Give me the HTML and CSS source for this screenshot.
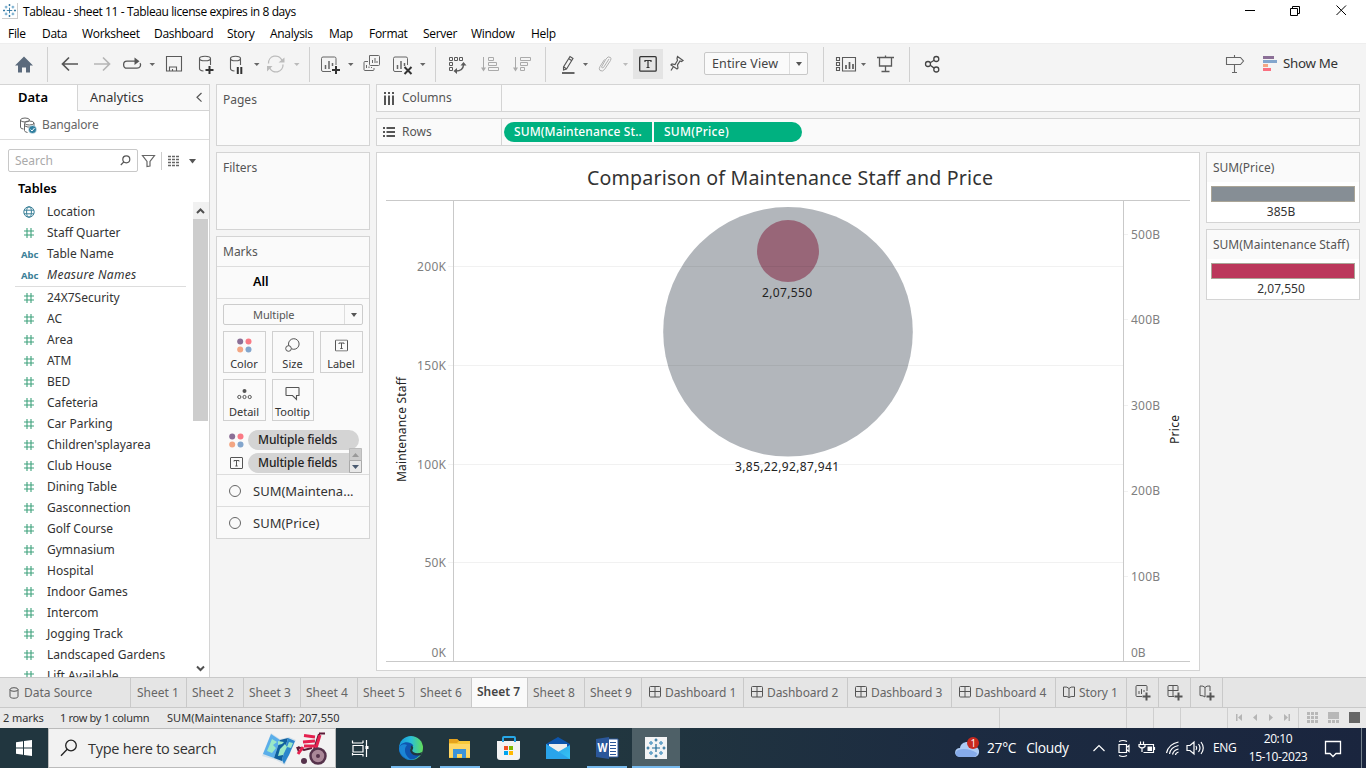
FILE: index.html
```html
<!DOCTYPE html>
<html lang="en">
<head>
<meta charset="utf-8">
<title>Tableau - sheet 11</title>
<link rel="stylesheet" href="styles.css">
</head>
<body>
<svg width="0" height="0" class="defs">
  <defs>
    <symbol id="hash" viewBox="0 0 12 12"><path d="M4 1v10M8 1v10M1 4h10M1 8h10" stroke="#3fa27c" stroke-width="1.1" fill="none"/></symbol>
    <symbol id="dash" viewBox="0 0 12 12"><path d="M.5 1.5q0-1 1-1h9q1 0 1 1v8.500q0 1-1 1h-9q-1 0-1-1zM.5 5.500h11M6 .5v10.500" stroke="#555" fill="none"/></symbol>
    <symbol id="book" viewBox="0 0 12 12"><path d="M6 2.500v9M.5 1q4-.5 5.500 1.500Q7.500.5 11.500 1v9.500q-4-.5-5.500 1-1.500-1.500-5.500-1z" stroke="#555" fill="none"/></symbol>
    <symbol id="dots" viewBox="0 0 15 15"><circle cx="3.200" cy="3.500" r="3" fill="#8b6f96"/><circle cx="11.500" cy="3.500" r="3" fill="#fa7a85"/><circle cx="3.200" cy="11.500" r="3" fill="#f3a683"/><circle cx="11.500" cy="11.500" r="3" fill="#83a6cd"/></symbol>
    <symbol id="label" viewBox="0 0 13 12"><rect x=".5" y=".5" width="12" height="11" rx=".5" fill="none" stroke="#555"/><path d="M4 4.500V3.500h5v1M6.500 3.500v5.500M5.300 9h2.400" fill="none" stroke="#555"/></symbol>
    <symbol id="tableau" viewBox="0 0 22 22"><path d="M11 7v8M7 11h8M11 1.500v3M9.500 3h3M11 17.500v3M9.500 19h3M1.500 11h3M3 9.500v3M17.500 11h3M19 9.500v3" stroke="#1f6a97" stroke-width="1.200"/><path d="M6 4v4M4 6h4M16 4v4M14 6h4M6 14v4M4 16h4M16 14v4M14 16h4" stroke="#5f9fc6" stroke-width="1.500"/></symbol>
  </defs>
</svg>

<header class="titlebar">
  <svg class="applogo" width="16" height="16" viewBox="0 0 22 22"><use href="#tableau"/></svg>
  <span class="apptitle">Tableau - sheet 11 - Tableau license expires in 8 days</span>
  <svg width="136" height="24" viewBox="1230 0 136 24" fill="none" stroke="#000"><path d="M1245 10.500h10M1290.500 8.500h7v7h-7zM1292.500 8.500v-2h7v7h-2M1336.500 5.500l9.500 9.500M1346 5.500l-9.500 9.500"/></svg>
</header>
<nav class="menubar"><span>File</span><span>Data</span><span>Worksheet</span><span>Dashboard</span><span>Story</span><span>Analysis</span><span>Map</span><span>Format</span><span>Server</span><span>Window</span><span>Help</span></nav>

<div class="toolbar">
  <svg class="sep" width="48" height="41" viewBox="0 43 48 41"><path d="M24 56.500l9 9H30V72.500h-4v-5h-4v5h-4v-7h-3z" fill="#5b6a7c"/></svg>
  <svg width="112" height="41" viewBox="48 43 112 41" fill="none"><path d="M62.500 64H78M69 57.500L62.500 64l6.500 6.500" stroke="#555" stroke-width="1.700"/><path d="M94 64h15.500M103 57.500l6.500 6.500-6.500 6.500" stroke="#b5b5b5" stroke-width="1.700"/><path d="M136 61.200h-9c-4.500 0-4.500 7 0 7h10c3 0 4.500-3 3-5" stroke="#555" stroke-width="1.300"/><path d="M134.500 57.500l5 3.700-5 3.700z" fill="#555"/><path d="M149.500 63h5.500l-2.700 3z" fill="#666"/></svg>
  <svg class="sep" width="150" height="41" viewBox="160 43 150 41" fill="none" stroke="#5a5a5a" stroke-width="1.100"><path d="M166.500 56.500h15v14.500h-15zM169.500 71v-4h7v4M172.500 69v2"/><path d="M199.500 58.500v10c0 1.500 2 2.300 4 2.500M210.500 58.500v6.500"/><ellipse cx="205" cy="58.500" rx="5.500" ry="2.300"/><path d="M209.500 66v8M205.500 70h8" stroke="#333" stroke-width="2"/><path d="M230.500 58.500v10c0 1.500 2 2.300 4 2.500M240.500 58.500v6.500"/><ellipse cx="235.500" cy="58.500" rx="5" ry="2.300"/><path d="M237.800 67v7M241.300 67v7" stroke="#333" stroke-width="2"/><path d="M254 63h5.500l-2.700 3z" fill="#666" stroke="none"/><g stroke="#bbb" stroke-width="1.300"><path d="M268.500 63.500a7 7 0 0 1 13.500-3M283 64.500a7 7 0 0 1-13.500 3"/></g><path d="M278.500 62.500h6v-5zM267 66v5.500l5.500-5.500zM294 63h5.500l-2.700 3z" fill="#bbb" stroke="none"/></svg>
  <svg class="sep" width="126" height="41" viewBox="310 43 126 41" fill="none" stroke="#666"><path d="M331 71.500h-8q-1.500 0-1.500-1.500V58.500q0-1.500 1.500-1.500h11.500q1.500 0 1.500 1.500V65"/><path d="M325.500 69v-4M329 69v-8M332.500 66v-3" stroke-width="1.500"/><path d="M336 66v8M332 70h8" stroke="#333" stroke-width="2"/><path d="M348 63h5.500l-2.700 3zM420 63h5.500l-2.700 3z" fill="#666" stroke="none"/><path d="M368 61.500h-3q-1 0-1 1v7q0 1 1 1h8q1 0 1-1V68M369.500 55.500h9q1 0 1 1v8q0 1-1 1h-8q-1 0-1-1zM366.500 68v-3M369 68v-1.500M371.500 68v-1M372.500 63v-3M375 63v-5M377 63v-2"/><path d="M402 71.500h-7q-1.500 0-1.500-1.500V58.500q0-1.500 1.500-1.500h11q1.500 0 1.500 1.500V65"/><path d="M397.500 69v-4M401 69v-8M404.500 66v-3" stroke-width="1.500"/><path d="M404.500 67l7 7M411.500 67l-7 7" stroke="#333" stroke-width="2"/></svg>
  <svg class="sep" width="110" height="41" viewBox="436 43 110 41" fill="none" stroke="#5a5a5a"><path d="M449.500 57.500h3v3h-3zM454.500 57.500h3v3h-3zM459.500 57.500h3v3h-3zM449.500 62.500h3v3h-3zM449.500 67.500h3v3h-3z"/><path d="M456 71q7 0 7.500-6" stroke-width="1.500"/><path d="M460.500 65.500h6l-3-3.500zM457 68v6l-3.500-3z" fill="#5a5a5a" stroke="none"/><g stroke="#aaa"><path d="M483.500 57v13M488.500 57.500h5v3h-5zM488.500 62.500h8v3h-8zM488.500 67.500h10v3h-10zM515.500 57v13M520.500 57.500h10v3h-10zM520.500 62.500h7v3h-7zM520.500 67.500h4v3h-4z"/><path d="M481 67.500h5l-2.500 4zM513 67.500h5l-2.500 4z" fill="#aaa" stroke="none"/></g></svg>
  <svg width="87" height="41" viewBox="546 43 87 41" fill="none"><path d="M563.500 70v-3l6.500-10.500 3 2-6.500 10.500zM564 67l2.500 2M568.500 58.500l3 2" stroke="#555" stroke-width="1.100"/><path d="M562 73h12.500" stroke="#555" stroke-width="1.800"/><path d="M583 63h5l-2.500 3z" fill="#666"/><path d="M609 59l-5.500 8.500q-1.500 1-2-.5L606 59q2-3.500 4.500-1.500 1 1 0 3l-6 9q-2 2.500-4.500 1-1.500-1.500 0-4l4.500-7" stroke="#b0b0b0"/><path d="M623 63h5l-2.500 3z" fill="#bbb"/></svg>
  <div class="toggle"><svg width="18" height="16" viewBox="0 0 18 16" fill="none" stroke="#333"><rect x=".7" y=".7" width="16.500" height="14.500" rx="1" stroke-width="1.300"/><path d="M6 6V4.500h6V6M9 4.500v7M7.500 11.500h3" stroke-width="1.200"/></svg></div>
  <svg width="41" height="41" viewBox="663 43 41 41" fill="none" stroke="#555" stroke-width="1.200"><path d="M677.500 56.500l5.500 4-1.500 1-1.500-.5-2.500 4 .5 3-1 1-6-4 1-1 3 .5 2.500-4-.5-2zM673.500 66.500l-2.500 4"/></svg>
  <div class="combo"><span>Entire View</span><i class="caret"></i></div>
  <svg class="sep" width="16" height="41"></svg>
  <svg class="sep" width="86" height="41" viewBox="824 43 86 41" fill="none" stroke="#5a5a5a"><path d="M836.500 57.500h3v3h-3zM836.500 62.500h3v3h-3zM836.500 67.500h3v3h-3zM842.500 57.500h13v13.500h-13z" stroke-width="1.100"/><path d="M846 69v-4M849.500 69v-7M853 69v-5" stroke-width="1.700"/><path d="M861 63h5l-2.500 3z" fill="#666" stroke="none"/><path d="M877 57.500h17M879.500 58v8h12v-8M885.500 66v5M881.500 71.500h8M885.500 55.500v2" stroke-width="1.300"/></svg>
  <svg class="grow" width="300" height="41" viewBox="910 43 300 41" fill="none" stroke="#444" stroke-width="1.300"><circle cx="928" cy="64" r="2.500"/><circle cx="936.300" cy="59" r="2.500"/><circle cx="936.300" cy="69.500" r="2.500"/><path d="M930.200 62.700l4-2.400M930.200 65.300l4 2.800"/></svg>
  <svg width="34" height="41" viewBox="1222 43 34 41" fill="none" stroke="#666" stroke-width="1.100"><path d="M1226.500 57.500h14l3 3.500-3 3.500h-14zM1234.500 55v2.500M1234.500 64.500v7.500M1232 72.500h5"/></svg>
  <svg width="27" height="41" viewBox="1256 43 27 41"><path d="M1263 56h11v3h-11z" fill="#8b6f96"/><path d="M1263 60h14v3h-14z" fill="#83a6cd"/><path d="M1263 64h5v3h-5z" fill="#f3a683"/><path d="M1263 68h8v3h-8z" fill="#fa7080"/></svg>
  <span class="showme">Show Me</span>
</div>

<main class="main">
  <aside class="datapane">
    <div class="panetabs"><b>Data</b><div class="analytics"><span>Analytics</span><svg width="7" height="11" viewBox="0 0 7 11"><path d="M5.500 1L1 5.300l4.500 4.300" fill="none" stroke="#555" stroke-width="1.200"/></svg></div></div>
    <div class="source"><svg width="17" height="17" viewBox="0 0 17 17" fill="none" stroke="#666"><ellipse cx="5" cy="3" rx="4.500" ry="2"/><path d="M.5 3v7q0 2 3 2M4.500 6.500v7q0 1.500 3 2M14 6v4M5 9q3 2 6 .5M9.500 3V2.500"/><ellipse cx="9.300" cy="6" rx="4.700" ry="2"/><circle cx="12.500" cy="12.500" r="4" fill="#3280a0" stroke="#fff" stroke-width=".5"/><path d="M10.500 12.500l1.500 1.500 2.500-3" stroke="#fff"/></svg><span>Bangalore</span></div>
    <div class="searchrow">
      <div class="search"><span>Search</span><svg width="11" height="11" viewBox="0 0 11 11" fill="none" stroke="#555" stroke-width="1.200"><circle cx="6.300" cy="4.300" r="3.500"/><path d="M3.800 6.800L.8 10"/></svg></div>
      <svg width="61" height="24" viewBox="139 148 61 24" fill="none" stroke="#666"><path d="M142.500 154.500h12l-4.500 6v4.500l-3 .5v-5z" stroke-width="1.200"/><path d="M161.500 151v18" stroke="#ccc"/><path d="M168 155.500h12M168 158.500h12M168 161.500h12M168 164.500h12" stroke-width="1.300" stroke-dasharray="3 1"/><path d="M189 158h7l-3.500 4.500z" fill="#555" stroke="none"/></svg>
    </div>
    <b class="tables">Tables</b>
    <div class="fieldwrap">
      <div class="fields">
        <div><svg width="12" height="12" viewBox="0 0 12 12" fill="none" stroke="#3b8098"><circle cx="6" cy="6" r="5.200"/><ellipse cx="6" cy="6" rx="2.400" ry="5.200"/><path d="M1 4.200h10M1 7.800h10"/></svg><span>Location</span></div>
        <div><svg><use href="#hash"/></svg><span>Staff Quarter</span></div>
        <div><em>Abc</em><span>Table Name</span></div>
        <div><em>Abc</em><span class="it">Measure Names</span></div>
        <hr>
        <div><svg><use href="#hash"/></svg><span>24X7Security</span></div>
        <div><svg><use href="#hash"/></svg><span>AC</span></div>
        <div><svg><use href="#hash"/></svg><span>Area</span></div>
        <div><svg><use href="#hash"/></svg><span>ATM</span></div>
        <div><svg><use href="#hash"/></svg><span>BED</span></div>
        <div><svg><use href="#hash"/></svg><span>Cafeteria</span></div>
        <div><svg><use href="#hash"/></svg><span>Car Parking</span></div>
        <div><svg><use href="#hash"/></svg><span>Children'splayarea</span></div>
        <div><svg><use href="#hash"/></svg><span>Club House</span></div>
        <div><svg><use href="#hash"/></svg><span>Dining Table</span></div>
        <div><svg><use href="#hash"/></svg><span>Gasconnection</span></div>
        <div><svg><use href="#hash"/></svg><span>Golf Course</span></div>
        <div><svg><use href="#hash"/></svg><span>Gymnasium</span></div>
        <div><svg><use href="#hash"/></svg><span>Hospital</span></div>
        <div><svg><use href="#hash"/></svg><span>Indoor Games</span></div>
        <div><svg><use href="#hash"/></svg><span>Intercom</span></div>
        <div><svg><use href="#hash"/></svg><span>Jogging Track</span></div>
        <div><svg><use href="#hash"/></svg><span>Landscaped Gardens</span></div>
        <div><svg><use href="#hash"/></svg><span>Lift Available</span></div>
      </div>
      <div class="scroll"><svg width="16" height="17" viewBox="0 0 16 17"><path d="M4 11l3.500-3.500L11 11" fill="none" stroke="#505050" stroke-width="2"/></svg><div class="thumb"></div><svg width="16" height="17" viewBox="0 0 16 17"><path d="M4 6.500L7.500 10 11 6.500" fill="none" stroke="#505050" stroke-width="2"/></svg></div>
    </div>
  </aside>

  <section class="shelves">
    <div class="card pages">Pages</div>
    <div class="card filters">Filters</div>
    <div class="card marks">
      <div class="mhead">Marks</div>
      <div class="mall">All</div>
      <div class="mbody">
        <div class="mcombo"><span>Multiple</span><i class="caret"></i></div>
        <div class="mgrid">
          <div><svg width="15" height="15"><use href="#dots"/></svg><span>Color</span></div>
          <div><svg width="15" height="15" viewBox="0 0 15 15" fill="none" stroke="#555"><circle cx="8.800" cy="6" r="5.300"/><circle cx="3.500" cy="10.500" r="2.800" fill="#fafafa"/></svg><span>Size</span></div>
          <div><svg width="13" height="15" viewBox="0 -1.500 13 15"><use href="#label" width="13" height="12"/></svg><span>Label</span></div>
          <div><svg width="15" height="15" viewBox="0 0 15 15" fill="none" stroke="#555"><circle cx="7.500" cy="5" r="2" fill="#555" stroke="none"/><circle cx="2.300" cy="11" r="1.600"/><circle cx="7.500" cy="11" r="1.600"/><circle cx="12.700" cy="11" r="1.600"/></svg><span>Detail</span></div>
          <div><svg width="15" height="15" viewBox="0 0 15 15" fill="none" stroke="#555"><path d="M1.500 1.500h12q.5 0 .5.500v7.500h-2.500v4L7.500 9.500h-6q-.5 0-.5-.5V2q0-.5.500-.5z" stroke-width="1.100"/></svg><span>Tooltip</span></div>
        </div>
        <div class="pillrow"><svg width="15" height="15"><use href="#dots"/></svg><div>Multiple fields</div></div>
        <div class="pillrow"><svg width="15" height="12"><use href="#label" width="13" height="12" x="1"/></svg><div>Multiple fields</div></div>
        <svg class="spin" width="13" height="25" viewBox="0 0 13 25"><path d="M.5.500h12v12H.5z" fill="#ccc" stroke="#bbb"/><path d="M.5 12.500h12v12H.5z" fill="#e8e8e8" stroke="#aaa"/><path d="M3 9h7L6.500 5z" fill="#999"/><path d="M3 17h7l-3.500 4z" fill="#4a5a70"/></svg>
      </div>
      <div class="mrow"><i></i>SUM(Maintena...</div>
      <div class="mrow"><i></i>SUM(Price)</div>
    </div>
  </section>

  <section class="work">
    <div class="shelf"><div class="sname"><svg width="12" height="13" viewBox="0 0 12 13"><path d="M2 0v2M2 3.500V13M6 0v2M6 3.500V13M10 0v2M10 3.500V13" stroke="#555" stroke-width="2"/></svg>Columns</div></div>
    <div class="shelf"><div class="sname"><svg width="12" height="13" viewBox="0 0 12 13"><path d="M0 2h2M3.500 2H12M0 6h2M3.500 6H12M0 10h2M3.500 10H12" stroke="#555" stroke-width="2"/></svg>Rows</div><div class="pill p1">SUM(Maintenance St..</div><div class="pill p2">SUM(Price)</div></div>
    <div class="viewrow">
      <svg class="chart" width="824" height="519" viewBox="376 152 824 519">
        <rect x="376.500" y="152.500" width="823" height="518" fill="#fff" stroke="#d4d4d4"/>
        <text x="587" y="185" class="ctitle" textLength="406">Comparison of Maintenance Staff and Price</text>
        <circle cx="788" cy="331.800" r="124.800" fill="#b2b6bb"/>
        <circle cx="788" cy="251" r="31" fill="#986678"/>
        <path d="M448 266.500h675M448 365.500h675M448 464.500h675M448 562.500h675M1124 234.500h4M1124 319.500h4M1124 405.500h4M1124 491.500h4M1124 576.500h4" stroke="#000" stroke-opacity=".055" fill="none"/>
        <path d="M386 200.500h804M386 661.500h804M453.500 200v461M1123.500 200v461" stroke="#c9c9c9" fill="none"/>
        <g class="tick">
          <text x="417" y="271" textLength="29">200K</text><text x="417" y="370" textLength="29">150K</text><text x="417" y="469" textLength="29">100K</text><text x="424.500" y="567" textLength="21.500">50K</text><text x="431.500" y="657" textLength="14.500">0K</text>
          <text x="1131" y="239" textLength="29">500B</text><text x="1131" y="324" textLength="29">400B</text><text x="1131" y="410" textLength="29">300B</text><text x="1131" y="495" textLength="29">200B</text><text x="1131" y="581" textLength="29">100B</text><text x="1131" y="657" textLength="14.500">0B</text>
        </g>
        <g class="mlabel">
          <text x="762" y="297" textLength="50">2,07,550</text><text x="735" y="471" textLength="104">3,85,22,92,87,941</text>
          <text transform="translate(406 482) rotate(-90)" textLength="105">Maintenance Staff</text><text transform="translate(1179 444) rotate(-90)" textLength="29">Price</text>
        </g>
      </svg>
      <div class="legends">
        <div class="legend"><div class="lh"><span>SUM(Price)</span></div><div class="bar grey"></div><p>385B</p></div>
        <div class="legend"><div class="lh"><span>SUM(Maintenance Staff)</span></div><div class="bar red"></div><p>2,07,550</p></div>
      </div>
    </div>
  </section>
</main>

<div class="tabs">
  <div class="tab ds"><svg width="10" height="12" viewBox="0 0 10 12" fill="none" stroke="#555"><ellipse cx="5" cy="2.500" rx="4" ry="1.800"/><path d="M1 2.500v7c0 2.300 8 2.300 8 0v-7"/></svg>Data Source</div>
  <div class="tab s1">Sheet 1</div><div class="tab">Sheet 2</div><div class="tab">Sheet 3</div><div class="tab">Sheet 4</div><div class="tab">Sheet 5</div><div class="tab">Sheet 6</div><div class="tab active">Sheet 7</div><div class="tab">Sheet 8</div><div class="tab">Sheet 9</div>
  <div class="tab d d1"><svg><use href="#dash"/></svg>Dashboard 1</div><div class="tab d"><svg><use href="#dash"/></svg>Dashboard 2</div><div class="tab d"><svg><use href="#dash"/></svg>Dashboard 3</div><div class="tab d"><svg><use href="#dash"/></svg>Dashboard 4</div>
  <div class="tab d story"><svg><use href="#book"/></svg>Story 1</div>
  <div class="tab new"><svg viewBox="0 0 16 16" fill="none" stroke="#555"><path d="M7 11.500H2q-1 0-1-1v-9q0-1 1-1h9q1 0 1 1V6M4 9V6M6.500 9V4M9 7V5"/><path d="M11.500 7.500v8M7.500 11.500h8" stroke-width="2"/></svg></div>
  <div class="tab new"><svg viewBox="0 0 16 16" fill="none" stroke="#555"><path d="M7 11.500H2q-1 0-1-1v-9q0-1 1-1h8q1 0 1 1V6M6 .5v11M1 5.500h10"/><path d="M11.500 7.500v8M7.500 11.500h8" stroke-width="2"/></svg></div>
  <div class="tab new"><svg viewBox="0 0 16 16" fill="none" stroke="#555"><path d="M6 2.500v9.500Q4.500 10.500 1 10.500V1q3.500-.5 5 1.500Q7.500.5 11 1v5"/><path d="M11.500 7.500v8M7.500 11.500h8" stroke-width="2"/></svg></div>
</div>

<div class="status"><span class="t1">2 marks</span><span class="t2">1 row by 1 column</span><span class="t3">SUM(Maintenance Staff): 207,550</span>
  <svg width="367" height="20" viewBox="999 708 367 20"><path d="M999.500 708v20M1126.500 708v20M1153.500 708v20M1180.500 708v20M1227.500 708v20M1298.500 708v20" stroke="#cfcfcf"/><path d="M1236 714h1.500v7h-1.500zM1242 714v7l-4-3.500zM1257 714v7l-4-3.500zM1269 714v7l4-3.500zM1284 714v7l4-3.500zM1288.500 714h1.500v7h-1.500z" fill="#b5b5b5"/><path d="M1307 712h3v3h-3zM1311 712h3v3h-3zM1315 712h3v3h-3zM1307 716h3v3h-3zM1311 716h3v3h-3zM1315 716h3v3h-3zM1307 720h3v3h-3zM1311 720h3v3h-3zM1315 720h3v3h-3zM1328 712h11v7h-11zM1328 720h3v3h-3zM1332 720h3v3h-3zM1336 720h3v3h-3z" fill="#b8b8b8"/><path d="M1349 712h11v11h-11z" fill="#666"/></svg>
</div>

<footer class="taskbar">
  <svg width="48" height="40" viewBox="0 728 48 40" fill="#fff"><path d="M16 742.300l7-1v6.200h-7zM24 741.100l8-1.100v7.500h-8zM16 748.500h7v6.200l-7-1zM24 748.500h8v7.500l-8-1.100z"/></svg>
  <div class="winsearch"><svg width="18" height="18" viewBox="0 0 18 18" fill="none" stroke="#222" stroke-width="1.300"><circle cx="11" cy="6.500" r="5.300"/><path d="M7.200 10.300L1 16.800"/></svg><span>Type here to search</span>
    <svg width="68" height="38" viewBox="261 729 68 38"><path d="M271 733l9 6 9-2 7 3-8 17-3 8-9-5-14-4z" fill="#d4e1ea"/><path d="M271 734l9 6-6 18-11-4z" fill="#5aaeea"/><path d="M280 740l8-2-5 18-1 5-8-3z" fill="#0f5f9e"/><path d="M288 738l7 3-6 14-5 9-2-4z" fill="#2b86cc"/><path d="M272 739l5 3-4 3 3 3-4 5-5-2 3-7zM280 749l5-5 2 3-4 8-5 1zM289 742l4 1-2 5-4-1zM278 741l6 1-2 2-4 1z" fill="#9be8c6"/>
      <g fill="none"><path d="M325 733.500h-6M319 734l-5 15M312 748l-8 2-6-3M299 752l-2-5" stroke="#5c1b37" stroke-width="2"/><path d="M320 735l-4 13M303 742l12-1M304 735.500l11 1.500M304 746h11M303 747l-5 7" stroke="#e5214f" stroke-width="3"/><circle cx="318" cy="756" r="7.500" stroke="#55324b" stroke-width="2.500" fill="#aa8798"/><circle cx="318" cy="756" r="2" fill="#55324b"/><circle cx="304" cy="761" r="3" fill="#55324b"/></g></svg>
  </div>
  <svg class="apps" width="344" height="40" viewBox="336 728 344 40">
    <defs><linearGradient id="ed" x1="0" y1=".3" x2="1" y2=".3"><stop offset="0" stop-color="#1497de"/><stop offset=".5" stop-color="#2bbfd8"/><stop offset="1" stop-color="#62dd58"/></linearGradient><linearGradient id="ml" x1="0" y1="0" x2="1" y2="1"><stop offset="0" stop-color="#2a9be5"/><stop offset="1" stop-color="#35c5f5"/></linearGradient></defs>
    <path d="M352.500 743v-2.500M352.500 753v2.500M352 743h11M363 740.500v2.500M353 745.500h10v6.500h-10zM352 754.500h11v2M366.500 740v17" stroke="#fff" stroke-width="1.200" fill="none"/><path d="M365.500 746h3v3h-3z" fill="#fff"/>
    <circle cx="411" cy="748" r="12" fill="url(#ed)"/><path d="M399 748c1-6 10-8 14-3 1 2-2 1-3 4 1 4 7 6 11 4-4 8-15 9-20 2q-2-3-2-7z" fill="#0f55b0"/><path d="M407 745c-4 4-2 12 5 15-7 0-13-6-13-12 1-3 5-5 8-3z" fill="#1b86d6"/><path d="M411 745.500c3.500 1 2 3.500 1.200 5 1 3 6 3.500 10 1.500l-1 3c-5 1.500-10 0-11-4-.5-2 1-3.500.8-5.500z" fill="#21363f"/>
    <path d="M449 739h8l2 2h11v17h-21z" fill="#f9c83a"/><path d="M449 739h8l2 2-2 2h-8z" fill="#e6a21d"/><path d="M449 744h21v13h-21z" fill="#ffd766"/><path d="M453 749h13v9h-4v-4h-5v4h-4z" fill="#3d93d8"/>
    <path d="M497 741h23v16q0 3-3 3h-17q-3 0-3-3z" fill="#f3f3f3"/><path d="M503 742v-4q0-1 1-1h10q1 0 1 1v4" stroke="#27a8e8" stroke-width="2" fill="none"/><path d="M504 746h4v4h-4z" fill="#f25022"/><path d="M509 746h4v4h-4z" fill="#7fba00"/><path d="M504 751h4v4h-4z" fill="#00a4ef"/><path d="M509 751h4v4h-4z" fill="#ffb900"/>
    <path d="M546 744l12-7 12 7v4h-24z" fill="#0d55ac"/><path d="M549 744h18v8h-18z" fill="#eee"/><path d="M546 744l12 8 12-7v14h-24z" fill="url(#ml)"/><path d="M546 744l24 15h-24z" fill="#2aa4ea"/>
    <path d="M608 739h10v18h-10z" fill="#fff" stroke="#2b579a"/><path d="M610 742.500h6M610 745.500h6M610 748.500h6M610 751.500h6M610 754.500h6" stroke="#2b579a"/><path d="M596 739l13-2v22l-13-2z" fill="#2b579a"/><text x="597.500" y="752" class="wd" textLength="10" lengthAdjust="spacingAndGlyphs">W</text>
    <path d="M632 728h48v40h-48z" fill="#4e6067"/><path d="M645 737h22v22h-22z" fill="#f3f4f5"/><use href="#tableau" x="645" y="737" width="22" height="22"/>
    <path d="M391 766h40v2h-40zM440 766h40v2h-40zM587 766h40v2h-40zM632 766h48v2h-48z" fill="#76b9ed"/>
  </svg>
  <div class="weather"><svg width="28" height="26" viewBox="953 734 28 26"><path d="M960 756c-7-1-6-9 0-9 1-7 11-8 13-2 8 0 8 11 1 11z" fill="#aecbf5"/><path d="M960 756c-5 0-6-5-2-7q9-3 19 3 0 4-4 4z" fill="#86abea"/><circle cx="973" cy="742" r="6" fill="#c7291f"/><text x="970.500" y="746" class="badge">1</text></svg><span>27°C</span><span class="cl">Cloudy</span></div>
  <svg width="118" height="40" viewBox="1090 728 118 40" fill="none" stroke="#fff" stroke-width="1.200"><path d="M1093.500 751l5.500-5.500 5.500 5.500M1119 744.500h7.500v8h-7.500zM1126.500 747.500l2.500-2v6l-2.500-2M1119 741.500q4-2 8 0M1119 755.500q4 2 8 0"/><path d="M1145 744.500h8.500v8h-10M1154.500 747v3"/><path d="M1147.500 746.500h4.500v4.500h-4.500z" fill="#fff" stroke="none"/><path d="M1140.500 741.500v3M1143.500 741.500v3M1139 744.500h6v2q-3 3-6 0zM1142 748v4"/><path d="M1166.500 753q2-9 12-11M1169.500 754q1-7 9-8.500M1172.500 754.500q1-4.500 6-5.500M1175.500 755q0-2 3-3"/><path d="M1187 745.500h3l4-3.500v12l-4-3.500h-3zM1196 746q1.500 2 0 4M1198.500 744q3 4 0 8M1201 742q4.500 6 0 12"/></svg>
  <span class="eng">ENG</span>
  <div class="clock"><span>20:10</span><span>15-10-2023</span></div>
  <svg width="52" height="40" viewBox="1314 728 52 40" fill="none" stroke="#fff" stroke-width="1.300"><path d="M1325.500 741.500h15v12h-4.500l-3 3-3-3h-4.500z"/><path d="M1361.500 728v40" stroke="#74818c" stroke-width="1"/></svg>
</footer>
</body>
</html>
```
FILE: styles.css
```css
* { box-sizing: border-box; }
body { margin: 0; width: 1366px; height: 768px; overflow: hidden; background: #f4f4f4; color: #333; font: 12px/16px "Noto Sans", sans-serif; display: flex; flex-direction: column; }
svg { display: block; flex: none; }
.defs { height: 0; margin-bottom: 0; }
span, b { white-space: nowrap; }

.titlebar { height: 24px; background: #fff; display: flex; align-items: flex-start; padding-left: 2px; flex: none; }
.applogo { margin: 3px 5px 0 0; border-right: 1px solid #ccc; border-bottom: 1px solid #ccc; }
.apptitle { flex: 1; color: #000; font-family: "Open Sans", sans-serif; line-height: 24px; letter-spacing: -.4px; }
.menubar { height: 19px; flex: none; background: #fff; color: #000; font-family: "Open Sans", sans-serif; line-height: 19px; letter-spacing: -.3px; padding-left: 8px; display: grid; grid-template-columns: 34px 40px 72px 73px 43px 59px 40px 54px 48px 60px 60px; }

.toolbar { height: 41px; flex: none; display: flex; background: #f4f4f4; border-top: 1px solid #eee; }
.toolbar > svg { margin-top: -1px; }
.sep { background: linear-gradient(#d0d0d0, #d0d0d0) no-repeat 100% 4px / 1px 35px; }
.grow { margin-right: 12px; }
.toggle { width: 30px; height: 30px; margin-top: 5px; background: #e4e4e4; display: grid; place-items: center; }
.combo { width: 104px; height: 23px; margin-top: 8px; background: #fafafa; border: 1px solid #c8c8c8; border-radius: 2px; display: flex; align-items: center; padding-left: 7px; font-size: 12.500px; letter-spacing: .1px; color: #444; }
.combo span { flex: 1; }
.caret { width: 18px; height: 100%; border-left: 1px solid #ddd; display: grid; place-items: center; }
.caret::after { content: ""; border: 3.500px solid transparent; border-top: 4px solid #555; border-bottom: 0; }
.showme { line-height: 39px; font-size: 13.300px; letter-spacing: -.3px; color: #333; }

.main { height: 593px; flex: none; display: flex; }
.datapane { width: 210px; background: #fff; border: 1px solid #d4d4d4; border-width: 1px 1px 0 0; display: flex; flex-direction: column; overflow: hidden; }
.panetabs { display: flex; height: 26px; flex: none; }
.panetabs b { width: 77px; padding-left: 18px; font-size: 13px; line-height: 25px; color: #000; font-weight: 600; }
.analytics { flex: 1; background: #f9f9f9; border: 1px solid #d4d4d4; border-width: 0 0 1px 1px; display: flex; align-items: center; justify-content: space-between; padding: 0 6px 1px 12px; font-size: 12.700px; letter-spacing: .1px; color: #333; }
.source { height: 29px; flex: none; border-bottom: 1px solid #ddd; display: flex; align-items: center; gap: 5px; padding-left: 20px; color: #666; letter-spacing: -.15px; }
.searchrow { display: flex; padding: 9px 0 0 8px; height: 38px; flex: none; gap: 1px; }
.search { width: 130px; height: 23px; border: 1px solid #c8c8c8; border-radius: 2px; display: flex; justify-content: space-between; align-items: center; padding: 0 6px; color: #aaa; }
.tables { font-size: 12.700px; color: #000; line-height: 21px; padding-left: 18px; flex: none; font-weight: 600; height: 24px; }
.fieldwrap { flex: 1; display: flex; min-height: 0; overflow: hidden; }
.fields { width: 193px; flex: none; color: #333; }
.fields div { height: 21px; display: flex; align-items: center; padding: 0 0 2px 23px; }
.fields svg { width: 12px; height: 12px; margin-right: 12px; }
.fields em { font: bold 9.500px/12px "Noto Sans", sans-serif; color: #3b8098; width: 26px; margin: 2px 0 0 -2px; }
.it { font-style: italic; letter-spacing: .3px; }
.fields hr { border: 0; border-top: 1px solid #ddd; margin: 0 7px 1px 15px; }
.scroll { width: 16px; background: #fff; display: flex; flex-direction: column; height: 475px; }
.scroll svg:first-child { background: #f1f1f1; }
.thumb { height: 202px; width: 15px; background: #cdcdcd; margin-bottom: auto; }

.shelves { width: 154px; margin-left: 6px; color: #555; }
.card { border: 1px solid #d4d4d4; background: #fafafa; padding: 7px 6px; margin-bottom: 6px; }
.pages { height: 62px; }
.filters { height: 78px; }
.marks { padding: 0; height: 303px; }
.mhead { height: 30px; line-height: 29px; padding-left: 6px; border-bottom: 1px solid #ddd; }
.mall { height: 32px; line-height: 29px; padding-left: 36px; border-bottom: 1px solid #ddd; font-weight: 600; color: #000; font-size: 12.700px; }
.mbody { height: 176px; border-bottom: 1px solid #ddd; padding: 5px 6px 0; position: relative; }
.mcombo { width: 140px; height: 21px; border: 1px solid #ccc; border-radius: 2px; display: flex; align-items: center; padding-left: 29px; font-size: 11px; letter-spacing: -.1px; }
.mcombo span { flex: 1; }
.mgrid { display: grid; grid-template-columns: 43px 42px 43px; grid-auto-rows: 42px; gap: 6px; margin-top: 6px; color: #333; font-size: 11px; }
.mgrid > div { border: 1px solid #d0d0d0; display: flex; flex-direction: column; align-items: center; padding: 6px 1px 0 0; }
.mgrid span { margin-top: 3px; line-height: 16px; }
.pillrow { display: flex; align-items: center; height: 20px; margin: 9px 0 0 6px; gap: 4px; }
.pillrow + .pillrow { margin-top: 3px; }
.pillrow div { width: 111px; height: 20px; border-radius: 10px; background: #d4d4d4; line-height: 19px; padding-left: 10px; color: #222; font-weight: 500; letter-spacing: -.13px; }
.spin { position: absolute; right: 7px; bottom: 1px; }
.mrow { height: 31px; display: flex; align-items: center; padding-left: 12px; color: #333; font-size: 13px; }
.mrow + .mrow { border-top: 1px solid #ddd; height: 32px; }
.mrow i { width: 12px; height: 12px; border: 1px solid #666; border-radius: 50%; margin-right: 12px; }

.work { width: 984px; margin-left: 6px; }
.shelf { height: 28px; border: 1px solid #d4d4d4; background: #fafafa; margin-bottom: 6px; display: flex; align-items: center; }
.sname { width: 125px; height: 26px; border-right: 1px solid #d4d4d4; display: flex; align-items: center; gap: 7px; padding-left: 6px; color: #555; }
.pill { background: #00b180; color: #fff; height: 20px; line-height: 19px; white-space: nowrap; font-weight: 500; font-size: 12px; letter-spacing: .1px; }
.p1 { width: 148px; margin: 0 2px; padding-left: 10px; border-radius: 10px 0 0 10px; }
.p2 { width: 148px; padding-left: 10px; border-radius: 0 10px 10px 0; letter-spacing: .25px; }
.viewrow { display: flex; gap: 6px; }
.chart { font-family: "Noto Sans", sans-serif; }
.ctitle { font-size: 19.600px; fill: #333; }
.tick { font-size: 12px; fill: #808080; }
.mlabel { font-size: 12px; fill: #222; }
.legends { width: 154px; display: flex; flex-direction: column; gap: 6px; }
.legend { height: 71px; border: 1px solid #d4d4d4; background: #fff; color: #555; }
.lh { height: 29px; background: #fafafa; line-height: 30px; padding-left: 6px; }
.bar { width: 144px; height: 16px; margin: 4px 0 0 4px; border: 1px solid #aaa597; }
.grey { background: #868e95; }
.red { background: #bb385b; }
.legend p { margin: 2px 0 0; text-align: center; padding-right: 4px; color: #333; }

.tabs { height: 31px; flex: none; display: flex; background: #e5e5e5; border: 1px solid #c9c9c9; border-width: 1px 0; color: #666; }
.tab { width: 57px; border-right: 1px solid #c9c9c9; padding-left: 5px; line-height: 29px; white-space: nowrap; display: flex; align-items: center; }
.tab.ds { width: 131px; padding-left: 9px; gap: 5px; }
.tab.s1 { width: 56px; padding-left: 6px; }
.tab.active { width: 56px; background: #fafafa; color: #444; font-weight: 600; font-size: 12px; line-height: 27px; align-items: flex-start; }
.tab.d { width: 104px; padding-left: 7px; gap: 4px; letter-spacing: -.08px; }
.tab.d svg { width: 12px; height: 12px; margin-top: -2px; }
.tab.d1 { width: 102px; }
.tab.d.story { width: 71px; }
.tab.new { width: 32px; padding-left: 8px; }
.tab.new svg { width: 16px; height: 16px; }
.status { height: 20px; flex: none; background: #e9e9e9; display: flex; font-size: 11px; line-height: 20px; color: #333; }
.t1 { padding-left: 3px; width: 60px; letter-spacing: -.1px; }
.t2 { width: 107px; letter-spacing: -.3px; }
.t3 { flex: 1; letter-spacing: .04px; }

.taskbar { height: 40px; flex: none; background: linear-gradient(90deg, #21363f 0, #21363f 45%, #1c2b41 70%, #1a253e); display: flex; color: #fff; font-family: "Open Sans", sans-serif; }
.winsearch { width: 288px; background: #f2f2f2; border: 1px solid #bbb; color: #333; display: flex; align-items: center; padding-left: 11px; font-size: 14.500px; letter-spacing: -.27px; }
.winsearch span { margin: 2px 0 0 10px; flex: 1; }
.winsearch svg:last-child { margin-right: 6px; }
.wd { font: bold 12px "Open Sans", sans-serif; fill: #fff; }
.badge { font: 10px "Open Sans", sans-serif; fill: #fff; }
.weather { margin-left: auto; width: 137px; display: flex; align-items: center; font-size: 13.800px; letter-spacing: -.3px; }
.weather span { margin-left: 6px; }
.weather .cl { margin-left: 10px; }
.eng { width: 36px; padding-left: 5px; line-height: 40px; letter-spacing: -.4px; }
.clock { width: 70px; display: flex; flex-direction: column; align-items: center; line-height: 18px; padding: 2px 2px 0 0; letter-spacing: -.4px; }
```
